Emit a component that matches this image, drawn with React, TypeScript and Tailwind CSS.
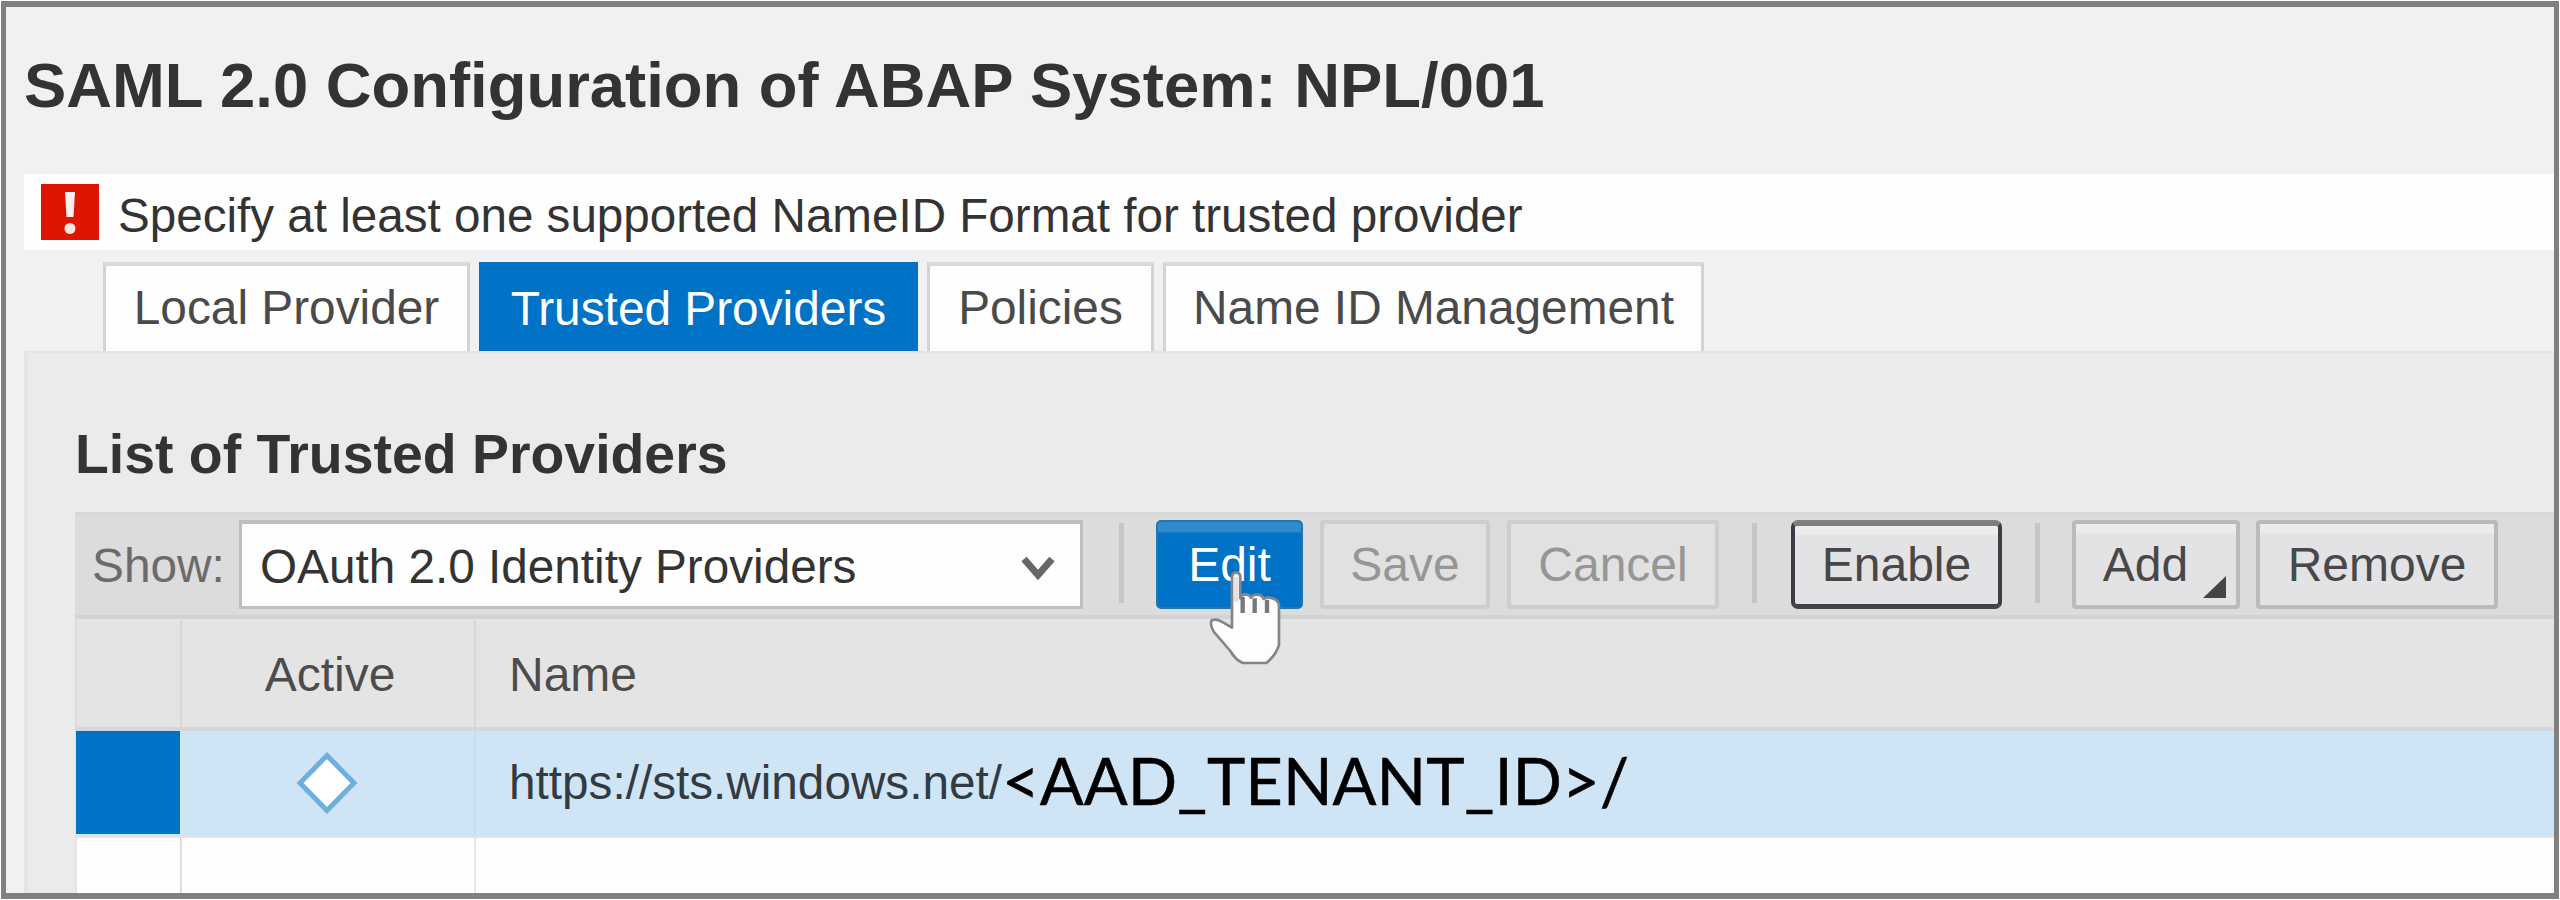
import type { ReactNode } from "react";

function Tab({ children, active, className }: { children: ReactNode; active?: boolean; className: string }) {
  return (
    <div
      className={`flex h-full shrink-0 items-center justify-center text-[47.8px] ${
        active
          ? "bg-[#0073c6] pt-[4px] text-white"
          : "border-x-[3px] border-t-4 border-x-[#d3d3d5] border-t-[#dadadc] bg-[#fefefe] pb-px text-[#4a4a4a]"
      } ${className}`}
    >
      {children}
    </div>
  );
}

function Separator({ className }: { className: string }) {
  return <div className={`mt-[3px] h-[80px] w-[5px] shrink-0 bg-[#c6c6c7] ${className}`} />;
}

function ToolButton({ children, variant, className }: { children: ReactNode; variant: "primary" | "disabled" | "focused" | "normal"; className: string }) {
  const look = {
    primary: "rounded-[5px] border-2 border-[#2476b1] bg-linear-to-b from-[#2e8bcd] from-11% to-[#0073c6] to-13% text-white",
    disabled: "rounded-[4px] border-4 border-[#cdcdce] bg-[#e2e1e2] text-[#969696]",
    focused: "rounded-[7px] border-x-4 border-t-[6px] border-b-[5px] border-x-[#3d3d45] border-t-[#7e7e81] border-b-[#424247] bg-linear-to-b from-[#ececed] from-10% to-[#e3e2e4] to-13% text-[#484848]",
    normal: "rounded-[4px] border-4 border-[#bababb] bg-linear-to-b from-[#ececed] from-10% to-[#e3e2e4] to-13% text-[#484848]",
  }[variant];
  return (
    <button className={`relative flex h-[89px] shrink-0 items-center justify-center ${look} ${className}`}>
      {children}
    </button>
  );
}

function HandCursor() {
  return (
    <svg className="pointer-events-none absolute top-[49px] left-[52px] z-10 h-[98px] w-[74px]" viewBox="207 212 222 294">
      <path
        d="M279 388 V238 Q279 223 291 223 Q304 223 304 238 V300 Q306 288 320 288 Q333 289 336 298 Q342 288 355 289 Q370 290 374 302 Q380 296 392 298 Q420 302 420 325 V440 Q410 472 382 494 H312 Q290 486 274 458 L224 400 Q212 378 218 366 Q232 360 248 370 Z"
        fill="#fdfdfe"
        stroke="#858589"
        strokeWidth="8"
        strokeLinejoin="round"
      />
      <path d="M311 296 V344 M347 300 V344 M384 304 V344" stroke="#77777c" strokeWidth="13" fill="none" />
      <path d="M292 236 V310" stroke="#e2e2e6" strokeWidth="14" />
    </svg>
  );
}

export default function App() {
  return (
    <div className="h-[900px] w-[2560px] overflow-hidden bg-white p-px font-['Liberation_Sans',Arial,sans-serif] text-[48px] leading-none whitespace-nowrap">
      <div className="flex h-[898px] w-[2558px] flex-col overflow-hidden border-x-[5px] border-y-[6px] border-[#808080] bg-[#f1f1f1] pl-[18px]">
        <h1 className="flex h-[167px] shrink-0 items-center pb-[10px] pl-[-2px] text-[63.4px] font-bold text-[#333335]">
          SAML 2.0 Configuration of ABAP System: NPL/001
        </h1>

        <div className="flex h-[76px] shrink-0 items-center bg-[#fefefe] pl-[17px] text-[#333]">
          <svg className="h-[56px] w-[58px] shrink-0" viewBox="0 0 58 56">
            <rect width="58" height="56" fill="#dd1600" />
            <path d="M24 8 H34 L32.5 33 H25.5 Z" fill="#fff0ee" />
            <circle cx="29" cy="44.500" r="5.500" fill="#ffe4e0" />
          </svg>
          <span className="pt-[8px] pl-[19px] text-[47.6px]">
            Specify at least one supported NameID Format for trusted provider
          </span>
        </div>

        <div className="mt-[12px] flex h-[89px] shrink-0 gap-[9px] pl-[79px]">
          <Tab className="w-[367px]">Local Provider</Tab>
          <Tab className="w-[439px]" active>Trusted Providers</Tab>
          <Tab className="w-[227px]">Policies</Tab>
          <Tab className="w-[541px]">Name ID Management</Tab>
        </div>

        <div className="flex min-h-0 flex-1 flex-col border-t-2 border-l-4 border-[#e4e4e6] bg-[#ebebeb] pl-[47px]">
          <h2 className="flex h-[159px] shrink-0 items-center pt-[45px] text-[55.4px] font-bold text-[#333335]">
            List of Trusted Providers
          </h2>

          <div className="flex h-[107px] shrink-0 items-start border-t-4 border-b-4 border-t-[#d8d8d8] border-b-[#d3d3d3] bg-[#dcdcdc] pt-[4px] pl-[17px]">
            <span className="w-[147px] shrink-0 pt-[22px] text-[47.8px] text-[#6b6b6b]">Show:</span>
            <div className="flex h-[89px] w-[844px] shrink-0 items-center justify-between border-[3px] border-t-4 border-[#bfbfbf] bg-[#fefefe] pr-[24px] pl-[18px] text-[#333]">
              <span className="pt-[3px] text-[47.7px]">OAuth 2.0 Identity Providers</span>
              <svg className="mt-[6px] h-[26px] w-[36px]" viewBox="0 0 36 26">
                <path d="M4 4 L18 20 L32 4" fill="none" stroke="#686868" strokeWidth="7" />
              </svg>
            </div>
            <Separator className="ml-[36px]" />
            <div className="relative ml-[32px] shrink-0">
              <ToolButton variant="primary" className="w-[147px]">Edit</ToolButton>
              <HandCursor />
            </div>
            <ToolButton variant="disabled" className="ml-[17px] w-[170px]">Save</ToolButton>
            <ToolButton variant="disabled" className="ml-[17px] w-[212px]">Cancel</ToolButton>
            <Separator className="ml-[33px]" />
            <ToolButton variant="focused" className="ml-[34px] w-[211px]">Enable</ToolButton>
            <Separator className="ml-[33px]" />
            <ToolButton variant="normal" className="ml-[32px] w-[168px] pr-[21px]">
              Add
              <svg className="absolute right-[10px] bottom-[7px] h-[22px] w-[23px]" viewBox="0 0 23 22">
                <path d="M23 0 V22 H0 Z" fill="#444446" />
              </svg>
            </ToolButton>
            <ToolButton variant="normal" className="ml-[16px] w-[242px]">Remove</ToolButton>
          </div>

          <div className="grid h-[112px] shrink-0 grid-cols-[105px_294px_1fr] border-b-4 border-l-2 border-b-[#d5d7dc] border-l-[#dcdcdc] bg-[#e5e4e5] pt-px text-[#4c4c4c]">
            <div className="border-r-2 border-[#d7d7d8]" />
            <div className="flex items-center justify-center border-r-2 border-[#d7d7d8] pt-[2px] pl-[4px]">Active</div>
            <div className="flex items-center pt-[2px] pl-[33px]">Name</div>
          </div>

          <div className="grid h-[105px] shrink-0 grid-cols-[105px_296px_1fr] bg-[#cfe5f6] text-[#333b42]">
            <div className="mb-[2px] ml-px bg-[#0073c6]" />
            <div className="flex items-center justify-center border-r-2 border-[#c8dcec]">
              <svg className="mb-[2px] h-[62px] w-[62px]" viewBox="0 0 62 62">
                <path d="M31 3.500 L58 31 L31 58.500 L4 31 Z" fill="#fff" stroke="#6eb0dd" strokeWidth="5" />
              </svg>
            </div>
            <div className="flex items-center pl-[33px]">
              <span className="pb-px text-[47.7px]">https://sts.windows.net/</span>
              <span className="pb-[7px] font-['Lato',sans-serif] text-[65px] text-black [-webkit-text-stroke:0.5px_black]">&lt;AAD_TENANT_ID&gt;/</span>
            </div>
          </div>

          <div className="grid min-h-0 flex-1 grid-cols-[105px_294px_1fr] border-t-2 border-l-2 border-[#e2e5e8] bg-[#fefefe]">
            <div className="border-r-2 border-[#dededf]" />
            <div className="border-r-2 border-[#e6e6e9]" />
          </div>
        </div>
      </div>
    </div>
  );
}
